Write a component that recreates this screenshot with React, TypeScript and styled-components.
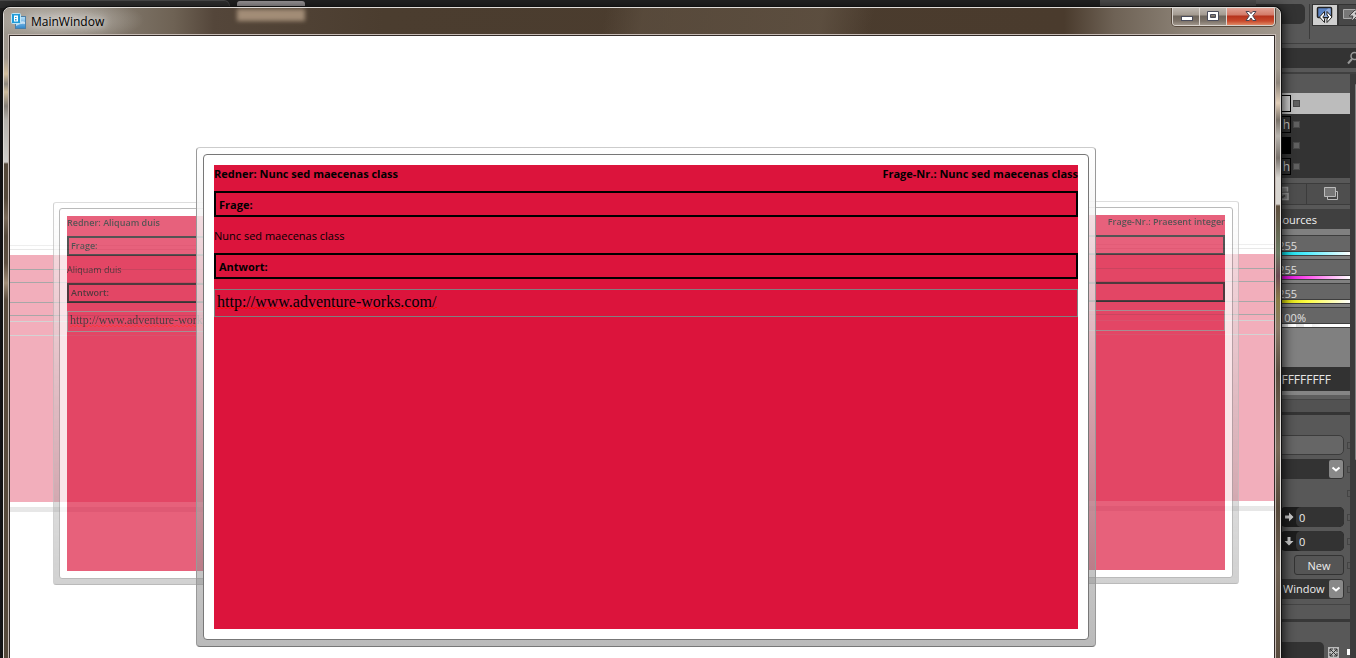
import React from 'react';
import styled, { createGlobalStyle } from 'styled-components';

const GlobalStyle = createGlobalStyle`
  *, *::before, *::after { box-sizing: border-box; }
  html, body, #root { height: 100%; }
  body {
    margin: 0;
    background: #202020;
    font-family: "Open Sans", "Noto Sans", sans-serif;
    font-size: 12px;
    line-height: 16px;
    color: #000;
  }
  h1, h2, h3, p { margin: 0; font: inherit; }
  button, input, select { font: inherit; color: inherit; border-radius: 0; margin: 0; }
`;

/* ---------- desktop ---------- */

const Desktop = styled.div`
  position: relative;
  display: flex;
  flex-direction: column;
  height: 100vh;
  overflow: hidden;
  background: #1e1e20;
`;

const Backdrop = styled.div`
  display: flex;
  flex: 1;
  min-height: 0;
`;

const DocumentArea = styled.div`
  flex: 1;
  min-width: 0;
  display: flex;
  align-items: flex-start;
  background: linear-gradient(#222 0, #222 20px, #17171a 60px, #1c1c20 100%);
`;

const ToolStrip = styled.div`
  width: 230px;
  height: 8px;
  background: #303030;
  border-top: 1px solid #4a4a4a;
  border-right: 1px solid #454545;
  border-radius: 0 6px 0 0;
`;

const DocumentTab = styled.div`
  width: 68px;
  height: 8px;
  margin: 1px auto 0 7px;
  border-radius: 3px 3px 0 0;
  background: #9a9698;
`;

const ToolHeader = styled.div`
  width: 156px;
  height: 8px;
  background: #4c4c4c;
`;

/* ---------- inspector on the right ---------- */

const Inspector = styled.aside`
  width: 100px;
  flex: none;
  display: flex;
  flex-direction: column;
  background: #585858;
  color: #eee;
  font-size: 11px;
`;

const TopTools = styled.div`
  display: flex;
  height: 44px;
  padding-top: 4px;
  overflow: hidden;
  border-bottom: 1px solid #404040;
  & > * { flex: none; }
`;

const ToolField = styled.div`
  width: 49px;
  height: 20px;
  border-radius: 0 5px 5px 0;
  background: #333;
`;

const Divider = styled.div`
  width: 1px;
  height: 35px;
  margin: 0 2px 0 4px;
  background: #3c3c3c;
`;

const ToolButton = styled.button<{ $active?: boolean }>`
  width: ${p => (p.$active ? 26 : 24)}px;
  height: 22px;
  padding: 0;
  display: grid;
  place-items: center;
  border: 1px solid #333;
  background: ${p => (p.$active ? '#cfcfcf' : '#474747')};
`;

const SearchBar = styled.div`
  display: flex;
  justify-content: flex-end;
  align-items: center;
  height: 20px;
  margin-top: 4px;
  background: #333;
  overflow: hidden;
`;

const Columns = styled.div`
  flex: 1;
  min-height: 0;
  display: flex;
  margin-top: 4px;
  border-top: 2px solid #404040;
`;

const Sheet = styled.div`
  flex: 1;
  min-width: 0;
  display: flex;
  flex-direction: column;
  & > * { flex: none; }
`;

const ScrollTrack = styled.div`
  width: 6px;
  padding: 10px 0 0 5px;
  background: #3b3b3b;
`;

const ScrollThumb = styled.div`
  height: 376px;
  border-radius: 2px 0 0 2px;
  background: #808080;
`;

const BrushList = styled.ul`
  list-style: none;
  margin: 19px 0 0;
  padding: 0;
  background: #333;
  height: 85px;
`;

const BrushRow = styled.li<{ $selected?: boolean }>`
  display: flex;
  align-items: center;
  gap: 2px;
  height: 21px;
  background: ${p => (p.$selected ? '#bcbcbc' : 'transparent')};
`;

const Swatch = styled.span<{ $fill: string }>`
  width: 35px;
  height: 17px;
  text-align: right;
  line-height: 15px;
  font-size: 12px;
  border: 1px solid #000;
  color: #ccc;
  background: ${p => p.$fill};
`;

const Marker = styled.span`
  width: 7px;
  height: 7px;
  background: #606060;
  border: 1px solid #484848;
`;

const ModeBar = styled.div`
  display: flex;
  height: 22px;
  margin: 5px 0 4px;
  border: solid #3c3c3c;
  border-width: 1px 0;
`;

const ModeButton = styled.button`
  width: 51px;
  flex: none;
  display: flex;
  align-items: center;
  justify-content: flex-end;
  padding: 0 16px 0 0;
  border: 0;
  border-right: 1px solid #3c3c3c;
  background: #4e4e4e;
  &:last-child {
    width: 43px;
    justify-content: center;
    padding: 0 0 0 5px;
    border-right: 0;
  }
`;

const ResourceTab = styled.h2`
  height: 20px;
  padding-right: 33px;
  text-align: right;
  line-height: 21px;
  background: #404040;
  color: #f4f4f4;
`;

const ColorEditor = styled.div`
  height: 138px;
  padding-top: 6px;
  background: #808080;
`;

const Channel = styled.label`
  display: flex;
  flex-direction: column;
  height: 21px;
  margin-bottom: 3px;
  border: solid #3e3e3e;
  border-width: 1px 0;
  background: #666;
`;

const ChannelInput = styled.input<{ $end: number }>`
  width: 100%;
  height: 15px;
  padding: 4px ${p => p.$end}px 0 0;
  border: 0;
  text-align: right;
  color: #e4e4e4;
  background: transparent;
`;

const ChannelBar = styled.span<{ $fill: string }>`
  height: 4px;
  border-top: 1px solid #3e3e3e;
  background: ${p => p.$fill};
`;

const HexInput = styled.input`
  width: 100%;
  height: 24px;
  padding: 0 19px 0 0;
  border: 0;
  text-align: right;
  background: #323232;
  color: #e8e8e8;
  font-size: 12px;
`;

const SectionBar = styled.div`
  height: 24px;
  border-top: 4px solid #858585;
  border-bottom: 3px solid #343434;
  background: linear-gradient(#5e5e5e 0 4px, #454545 4px 5px, #525252 5px);
`;

const Properties = styled.div`
  display: flex;
  flex-direction: column;
  gap: 4px;
  padding: 20px 0 5px;
  border-bottom: 1px solid #444;
`;

const PropertyRow = styled.div`
  display: flex;
  align-items: center;
  justify-content: flex-end;
  gap: 3px;
  height: 20px;
`;

const Pin = styled.span`
  width: 3px;
  height: 7px;
  border: 1px solid #444;
  border-right: 0;
`;

const FieldBox = styled.input`
  width: 80px;
  height: 20px;
  border: 1px solid #3c3c3c;
  border-radius: 5px;
  background: #666;
`;

const SelectBox = styled.label`
  display: flex;
  align-items: center;
  width: 80px;
  height: 20px;
  padding-right: 1px;
  border-radius: 4px;
  background: #333;
  & svg { flex: none; background: #888; border-radius: 2px; }
`;

const BareSelect = styled.select`
  appearance: none;
  flex: 1;
  min-width: 0;
  height: 20px;
  padding: 0 0 0 19px;
  border: 0;
  outline: 0;
  background: transparent;
`;

const NumberBox = styled.label`
  display: flex;
  align-items: center;
  width: 64px;
  height: 20px;
  border-radius: 5px;
  background: #1d1d1d;
  overflow: hidden;
  & svg { flex: none; margin: 0 2px 0 4px; }
`;

const NumberInput = styled.input`
  flex: 1;
  min-width: 0;
  height: 20px;
  padding: 0 3px;
  border: 0;
  border-radius: 5px 0 0 5px;
  background: #333;
`;

const NewButton = styled.button`
  width: 50px;
  height: 20px;
  padding: 0;
  border: 1px solid #333;
  border-radius: 3px;
  line-height: 20px;
  background: #555;
`;

const SectionGap = styled.div`
  height: 17px;
  border-bottom: 3px solid #383838;
`;

const FooterRow = styled.div`
  display: flex;
  align-items: center;
  gap: 4px;
  height: 20px;
  margin-top: 20px;
`;

const FooterField = styled.div`
  width: 68px;
  height: 20px;
  border-radius: 0 5px 0 0;
  background: #333;
`;

const Dot = styled.span`
  width: 3px;
  height: 6px;
  margin-left: auto;
  background: #fff;
`;

/* ---------- the glass window ---------- */

const GlassWindow = styled.main`
  position: absolute;
  top: 7px;
  left: 3px;
  right: 75px;
  bottom: -20px;
  display: flex;
  flex-direction: column;
  padding: 0 5px;
  border: 1px solid #e0dcd8;
  border-radius: 7px 7px 0 0;
  overflow: hidden;
  background:
    linear-gradient(
      #9b938a 0, #a0988e 50px, #d2bd9c 66px, #8e877e 76px, #cdbb9c 84px, #857e76 98px,
      #b4b0aa 112px, #d0cecb 154px, #54483a 156px, #54483a 190px, #7a6a59 210px,
      #54483a 228px, #5c4e40 255px, #a08d77 275px, #5a4c3d 292px, #54483a 100%
    ) left / 50% 100% no-repeat,
    linear-gradient(
      #9b938a 0, #a39b90 60px, #8e857b 75px, #e2cfb9 95px, #7a7269 112px,
      #b8b4ae 128px, #77706a 150px, #d8d5d0 170px, #d8d5d0 196px, #5d4d3c 198px, #6a7a62 245px,
      #6e4a55 268px, #8a7d45 293px, #8a7a68 320px, #5a4c3e 365px, #7b6a58 440px, #54483a 500px,
      #6e6153 560px, #54483a 100%
    ) right / 50% 100% no-repeat;
`;

const WindowShadow = styled.div`
  position: absolute;
  top: 7px;
  left: 3px;
  right: 75px;
  bottom: -20px;
  border-radius: 7px 7px 0 0;
  box-shadow: 0 0 0 1px #111, 1px 2px 12px 1px rgba(0, 0, 0, 0.8);
`;

const TitleBar = styled.header`
  display: flex;
  align-items: center;
  height: 27px;
  flex: none;
  margin: 0 -5px;
  padding: 0 5px 0 7px;
  background:
    radial-gradient(ellipse 80px 22px at 60px 12px, rgba(225, 222, 218, 0.6), rgba(225, 222, 218, 0) 100%),
    linear-gradient(100deg, rgba(73, 58, 44, 0) 47%, rgba(96, 82, 67, 0.6) 50%, rgba(96, 82, 67, 0.8) 64%, rgba(73, 58, 44, 0) 68%),
    linear-gradient(90deg, #9c958b 0, #857c70 100px, #6e6254 170px, #54463a 210px, #4b3d2f 380px, #4a3b2d 1060px, #6e6255 1110px, #8b8175 1180px, #a0978c 100%);
`;

const TabGlow = styled.span`
  width: 68px;
  height: 12px;
  margin: 0 auto 13px 133px;
  background: rgba(190, 166, 140, 0.75);
  filter: blur(2px);
`;

const WindowTitle = styled.h1`
  margin-left: 4px;
  line-height: 24px;
  text-shadow: 0 0 6px #ddd, 0 0 10px #ddd;
`;

const CaptionButtons = styled.div`
  display: flex;
  align-self: flex-start;
  height: 18px;
  border: 1px solid #d8d2cc;
  border-top: 0;
  border-radius: 0 0 4px 4px;
  box-shadow: 0 0 0 1px #57493c;
  overflow: hidden;
`;

const CaptionButton = styled.button<{ $close?: boolean }>`
  width: ${p => (p.$close ? 47 : 27)}px;
  height: 17px;
  padding: 0;
  display: grid;
  place-items: center;
  border: 0;
  border-right: ${p => (p.$close ? 0 : 1)}px solid #ddd6d0;
  background: ${p =>
    p.$close
      ? 'linear-gradient(#e3a294 0, #d37a68 7px, #b5321c 8px, #c8492c 13px, #e08a66 100%)'
      : 'linear-gradient(#bdb6ae 0, #a39a90 7px, #6e655b 8px, #7c7268 13px, #a0968b 100%)'};
  & svg { margin-bottom: 1px; }
`;

const Client = styled.section`
  position: relative;
  flex: 1;
  min-height: 0;
  overflow: hidden;
  border: 1px solid #332b28;
  border-bottom: 0;
  outline: 1px solid #c6bbb5;
  background: #fff;
`;

/* ---------- carousel cards ---------- */

interface Metrics {
  width: number;
  opacity: number;
  radius: number;
  frame: number;
  pad: number;
  edge: string;
  rim: string;
  font: number;
  weight: number;
  drop: number;
  urlFont: number;
  header: number;
  box: number;
  line: number;
  indent: number;
  answer: number;
  gap: number;
  field: number;
  squiggle: number;
  urlWidth: number;
  body: number;
}

const front: Metrics = {
  width: 900, opacity: 1, radius: 4, frame: 6, pad: 10, edge: '#777', rim: '#999', font: 11, weight: 700, drop: 2, urlFont: 16,
  header: 26, box: 26, line: 2, indent: 3, answer: 36, gap: 10, field: 28, squiggle: 18, urlWidth: 220, body: 464,
};
const middle: Metrics = {
  width: 689, opacity: 0.67, radius: 3, frame: 5, pad: 7, edge: '#999', rim: '#bbb', font: 9, weight: 600, drop: 0, urlFont: 12,
  header: 20, box: 20, line: 2, indent: 2, answer: 27, gap: 8, field: 21, squiggle: 14, urlWidth: 165, body: 355,
};
const back: Metrics = {
  width: 479, opacity: 0.34, radius: 2, frame: 3, pad: 5, edge: '#bbb', rim: '#ccc', font: 7, weight: 600, drop: 0, urlFont: 8,
  header: 14, box: 14, line: 1, indent: 2, answer: 19, gap: 5, field: 15, squiggle: 10, urlWidth: 0, body: 247,
};

const CardFrame = styled.article<{ $m: Metrics; $x: number; $y: number }>`
  position: absolute;
  left: calc(50% + ${p => p.$x}px);
  top: ${p => p.$y}px;
  width: ${p => p.$m.width}px;
  padding: ${p => p.$m.frame}px;
  opacity: ${p => p.$m.opacity};
  border: 1px solid;
  border-color: #ccc ${p => p.$m.rim} ${p => p.$m.edge};
  border-radius: ${p => p.$m.radius}px;
  background: linear-gradient(rgba(255, 255, 255, 0.9), rgba(112, 112, 112, 0.48));
  font-size: ${p => p.$m.font}px;
`;

const CardPaper = styled.div<{ $m: Metrics }>`
  padding: ${p => p.$m.pad}px;
  border: 1px solid ${p => p.$m.edge};
  border-radius: ${p => p.$m.radius}px;
  background: #fff;
`;

const CardBody = styled.div<{ $m: Metrics }>`
  height: ${p => p.$m.body}px;
  background: #dc143c;
`;

const CardHeader = styled.header<{ $m: Metrics }>`
  display: flex;
  justify-content: space-between;
  height: ${p => p.$m.header}px;
  font-weight: ${p => p.$m.weight};
  line-height: ${p => p.$m.font + 5 + p.$m.drop}px;
  white-space: nowrap;
`;

const CardNumber = styled.span`
  margin-left: auto;
`;

const Caption = styled.h3<{ $m: Metrics }>`
  height: ${p => p.$m.box}px;
  padding-left: ${p => p.$m.indent}px;
  border: ${p => p.$m.line}px solid #000;
  font-weight: ${p => p.$m.weight};
  line-height: ${p => p.$m.box - p.$m.line * 2 + p.$m.drop}px;
`;

const Question = styled.p<{ $m: Metrics }>`
  height: ${p => p.$m.answer}px;
  line-height: ${p => p.$m.answer + p.$m.drop}px;
`;

const AnswerField = styled.input<{ $m: Metrics }>`
  display: block;
  width: 100%;
  height: ${p => p.$m.field}px;
  margin-top: ${p => p.$m.gap}px;
  padding: 0 2px 3px;
  border: 1px solid #808080;
  outline: 0;
  background-color: transparent;
  background-image:
    repeating-linear-gradient(90deg, #f00 0 2px, transparent 2px 4px),
    repeating-linear-gradient(90deg, transparent 0 2px, #f00 2px 4px);
  background-repeat: no-repeat;
  background-size: ${p => p.$m.urlWidth}px 1px;
  background-position: 2px ${p => p.$m.squiggle}px, 2px ${p => p.$m.squiggle - 1}px;
  font-family: "Liberation Serif", serif;
  font-size: ${p => p.$m.urlFont}px;
`;

interface CardData {
  m: Metrics;
  x: number;
  y: number;
  speaker?: string;
  number?: string;
  question?: string;
  url?: string;
}

const site = 'http://www.adventure-works.com/';

const cards: CardData[] = [
  { m: back, x: -750, y: 209 },
  { m: back, x: 270, y: 208 },
  { m: middle, x: -589, y: 166, speaker: 'Aliquam duis', question: 'Aliquam duis', url: site },
  { m: middle, x: -92, y: 165, number: 'Praesent integer' },
  { m: front, x: -446, y: 111, speaker: 'Nunc sed maecenas class', number: 'Nunc sed maecenas class', question: 'Nunc sed maecenas class', url: site },
];

function Card({ m, x, y, speaker, number, question, url }: CardData) {
  return (
    <CardFrame $m={m} $x={x} $y={y}>
      <CardPaper $m={m}>
        <CardBody $m={m}>
          <CardHeader $m={m}>
            {speaker && <span>Redner: {speaker}</span>}
            {number && <CardNumber>Frage-Nr.: {number}</CardNumber>}
          </CardHeader>
          <Caption $m={m}>{question && 'Frage:'}</Caption>
          <Question $m={m}>{question}</Question>
          <Caption $m={m}>{url && 'Antwort:'}</Caption>
          <AnswerField $m={m} aria-label="Antwort" defaultValue={url} spellCheck={false} />
        </CardBody>
      </CardPaper>
    </CardFrame>
  );
}

/* ---------- icons ---------- */

const AppIcon = () => (
  <svg width="16" height="17" viewBox="0 0 16 17">
    <defs>
      <linearGradient id="pane" x1="0" y1="0" x2="0" y2="1">
        <stop offset="0" stopColor="#b8e2fa" />
        <stop offset="1" stopColor="#2f87cc" />
      </linearGradient>
    </defs>
    <rect x="4.500" y="3.500" width="10" height="12" fill="url(#pane)" stroke="#4a7ea6" />
    <path d="M5 11q5-4 9 -2v2q-4-1-9 2z" fill="#fff" opacity=".6" />
    <rect x=".5" y=".5" width="9" height="10" rx="1" fill="#1f9bd8" stroke="#bfe6f7" />
    <path d="M3 2.500h4v6H3z" fill="#fff" />
    <path d="M4 4h1.500v1H4zM4 6h1.500v1.500H4z" fill="#1f9bd8" />
  </svg>
);

const MinimizeIcon = () => (
  <svg width="13" height="12"><rect x="1.500" y="6.500" width="11" height="4" fill="#fff" stroke="#4a4c5a" /></svg>
);

const MaximizeIcon = () => (
  <svg width="12" height="12">
    <path d="M.5 1.500h11v9h-11zM3.500 4.500v3h5v-3z" fill="#fff" fillRule="evenodd" stroke="#4a4c5a" />
  </svg>
);

const CloseIcon = () => (
  <svg width="12" height="12" viewBox="0 0 12 12">
    <path d="M1 1.500h3.200l1.800 2.200 1.800-2.200h3.200l-3.300 4.300 3.300 4.700h-3.200l-1.800-2.500-1.800 2.500h-3.200l3.300-4.700z" fill="#fff" stroke="#4b4450" />
  </svg>
);

const DesignIcon = () => (
  <svg width="18" height="18" viewBox="0 0 18 18">
    <rect x="1.500" y="1.500" width="14" height="10" rx="1" fill="#5b83c4" stroke="#222" strokeWidth="1.500" />
    <path d="M3 11L12 2.500h2.500V11z" fill="#8fabdc" />
    <path d="M8.500 5.500L3.500 11l5 5.500v-3.500L6.800 11l1.700-2zM11 5.500l5 5.500-5 5.500v-3.500l1.700-2L11 9z" fill="#fff" stroke="#222" />
  </svg>
);

const BoltIcon = () => (
  <svg width="22" height="18" viewBox="0 0 22 18">
    <path d="M4.500 12.500v-9h14v9z" fill="#777" stroke="#aaa" />
    <path d="M16 4l-6 6h4l-2 6 8-8h-4l3-4z" fill="#ccc" stroke="#444" />
  </svg>
);

const SearchIcon = () => (
  <svg width="9" height="14" viewBox="0 0 9 14">
    <circle cx="7.500" cy="5" r="3.500" fill="none" stroke="#999" strokeWidth="1.500" />
    <path d="M5 8L1 12.500" stroke="#999" strokeWidth="2" />
  </svg>
);

const LockIcon = () => (
  <svg width="14" height="16" viewBox="0 0 14 16">
    <path d="M5.500 6v-4.500h6v4M3 7.500h9v6h-9z" fill="#777" stroke="#999" strokeWidth="1.500" />
    <path d="M6 11.500l3-2" stroke="#444" strokeWidth="2" />
  </svg>
);

const LayersIcon = () => (
  <svg width="17" height="16" viewBox="0 0 17 16">
    <path d="M4.500 5.500h10v8h-10z" fill="#444" stroke="#bbb" />
    <path d="M1.500 1.500h11v9h-11z" fill="#777" stroke="#bbb" />
  </svg>
);

const ChevronIcon = () => (
  <svg width="14" height="18" viewBox="0 0 14 18">
    <path d="M3.500 7.500l3.500 3 3.500-3" fill="none" stroke="#fff" strokeWidth="2" />
  </svg>
);

const ArrowIcon = ({ down = false }: { down?: boolean }) => (
  <svg width="10" height="10" viewBox="0 0 10 10">
    <path
      d={down ? 'M3.500 1h3v4h3L5 9.500.5 5h3z' : 'M1 3.500h4v-3L9.500 5 5 9.500v-3H1z'}
      fill="#ccc"
    />
  </svg>
);

const ExpandIcon = () => (
  <svg width="11" height="11" viewBox="0 0 11 11">
    <rect width="11" height="11" fill="#bbb" />
    <path d="M2 5V2h3M6 9h3V6M6 2h3v3M2 6v3h3M2 2l7 7M9 2L2 9" fill="none" stroke="#333" />
  </svg>
);

/* ---------- page ---------- */

const channels = [
  { name: 'Red', value: '255', end: 53, fill: 'linear-gradient(90deg, #00d8e0 25%, #5ef 55%, #fff)' },
  { name: 'Green', value: '255', end: 53, fill: 'linear-gradient(90deg, #d000d0 25%, #f5e 55%, #fff)' },
  { name: 'Blue', value: '255', end: 53, fill: 'linear-gradient(90deg, #d0d000 25%, #ff4 55%, #fff)' },
  { name: 'Alpha', value: '100%', end: 44, fill: 'linear-gradient(90deg, transparent 40%, #fff 75%), repeating-linear-gradient(90deg, #fff 0 8px, #ddd 8px 16px)' },
];

export default function App() {
  return (
    <Desktop>
      <GlobalStyle />
      <Backdrop>
        <DocumentArea>
          <ToolStrip />
          <DocumentTab />
          <ToolHeader />
        </DocumentArea>
        <Inspector>
          <TopTools>
            <ToolField />
            <Divider />
            <ToolButton $active aria-label="Design view"><DesignIcon /></ToolButton>
            <ToolButton aria-label="Events"><BoltIcon /></ToolButton>
          </TopTools>
          <SearchBar><SearchIcon /></SearchBar>
          <Columns>
            <Sheet>
              <BrushList>
                <BrushRow $selected><Swatch $fill="#ccc" /><Marker /></BrushRow>
                <BrushRow><Swatch $fill="#333">h</Swatch><Marker /></BrushRow>
                <BrushRow><Swatch $fill="#000" /><Marker /></BrushRow>
                <BrushRow><Swatch $fill="#333">h</Swatch><Marker /></BrushRow>
              </BrushList>
              <ModeBar>
                <ModeButton aria-label="Lock"><LockIcon /></ModeButton>
                <ModeButton aria-label="Layers"><LayersIcon /></ModeButton>
              </ModeBar>
              <ResourceTab>Resources</ResourceTab>
              <ColorEditor>
                {channels.map(c => (
                  <Channel key={c.name}>
                    <ChannelInput aria-label={c.name} defaultValue={c.value} $end={c.end} />
                    <ChannelBar $fill={c.fill} />
                  </Channel>
                ))}
              </ColorEditor>
              <HexInput aria-label="Hex value" defaultValue="#FFFFFFFF" />
              <SectionBar />
              <Properties>
                <PropertyRow><FieldBox aria-label="Name" /><Pin /></PropertyRow>
                <PropertyRow>
                  <SelectBox><BareSelect aria-label="Cursor"><option></option></BareSelect><ChevronIcon /></SelectBox>
                  <Pin />
                </PropertyRow>
                <PropertyRow><Pin /></PropertyRow>
                <PropertyRow>
                  <NumberBox><ArrowIcon /><NumberInput aria-label="Left" defaultValue="0" /></NumberBox>
                  <Pin />
                </PropertyRow>
                <PropertyRow>
                  <NumberBox><ArrowIcon down /><NumberInput aria-label="Top" defaultValue="0" /></NumberBox>
                  <Pin />
                </PropertyRow>
                <PropertyRow><NewButton>New</NewButton><Pin /></PropertyRow>
                <PropertyRow>
                  <SelectBox><BareSelect aria-label="Type"><option>Window</option></BareSelect><ChevronIcon /></SelectBox>
                  <Pin />
                </PropertyRow>
              </Properties>
              <SectionGap />
              <FooterRow><FooterField /><ExpandIcon /><Dot /></FooterRow>
            </Sheet>
            <ScrollTrack><ScrollThumb /></ScrollTrack>
          </Columns>
        </Inspector>
      </Backdrop>

      <WindowShadow />
      <GlassWindow>
        <TitleBar>
          <AppIcon />
          <WindowTitle>MainWindow</WindowTitle>
          <TabGlow />
          <CaptionButtons>
            <CaptionButton aria-label="Minimize"><MinimizeIcon /></CaptionButton>
            <CaptionButton aria-label="Maximize"><MaximizeIcon /></CaptionButton>
            <CaptionButton $close aria-label="Close"><CloseIcon /></CaptionButton>
          </CaptionButtons>
        </TitleBar>
        <Client>
          {cards.map((card, i) => <Card key={i} {...card} />)}
        </Client>
      </GlassWindow>
    </Desktop>
  );
}
